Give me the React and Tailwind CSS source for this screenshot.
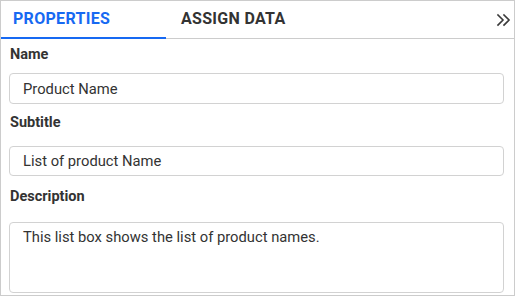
export default function App() {
  return (
    <div className="w-[515px] h-[296px] border border-[#cccccc] bg-white font-['Roboto',sans-serif] text-[14.75px] text-[#333333] flex flex-col">
      <div className="flex h-[38px] border-b border-[#cccccc] items-stretch shrink-0">
        <div className="relative w-[165px] flex items-center pl-3 font-bold text-[16px] tracking-[0.3px] text-[#1769f2] leading-5 pb-px">
          PROPERTIES
          <span className="absolute left-0 right-0 bottom-[-1px] h-[2px] bg-[#1769f2]" />
        </div>
        <div className="flex items-center pl-[15px] font-bold text-[16px] tracking-[0.3px] text-[#333333] leading-5 pb-px">
          ASSIGN DATA
        </div>
        <div className="ml-auto flex items-center pr-[2px]">
          <svg width="16" height="14" viewBox="0 0 16 14" fill="none" stroke="#3a3a3a" strokeWidth="1.6" strokeLinecap="square">
            <path d="M2 2l5 5-5 5" />
            <path d="M8 2l5 5-5 5" />
          </svg>
        </div>
      </div>
      <div className="flex flex-col pl-2 pr-[10px] pt-[6px]">
        <div className="leading-5 font-bold text-[14.5px] pl-px">Name</div>
        <div className="mt-[8px] h-[31px] border border-[#d2d2d2] rounded-[4px] flex items-center pl-[13px] leading-5">
          Product Name
        </div>
        <div className="mt-[9px] leading-5 font-bold text-[14.5px] pl-px">Subtitle</div>
        <div className="mt-[13px] h-[30px] border border-[#d2d2d2] rounded-[4px] flex items-center pl-[13px] leading-5">
          List of product Name
        </div>
        <div className="mt-[11px] leading-5 font-bold text-[14.5px] pl-px">Description</div>
        <div className="mt-[15px] h-[71px] border border-[#d2d2d2] rounded-[4px] pl-[13px] pt-[4px] leading-5">
          This list box shows the list of product names.
        </div>
      </div>
    </div>
  );
}
